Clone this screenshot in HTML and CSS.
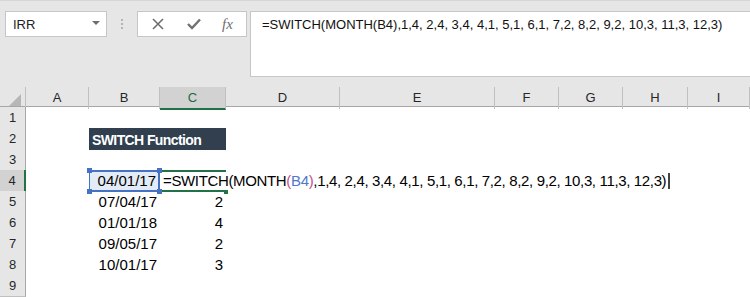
FILE: index.html
```html
<!DOCTYPE html>
<html lang="en">

<head>
    <meta charset="UTF-8">
    <title>SWITCH Function</title>
    <link rel="stylesheet" href="styles.css">
</head>

<body>
    <div class="toolbar">
        <div class="name-box">
            <span>IRR</span>
            <span class="caret"></span>
        </div>
        <div class="grip"><i></i><i></i><i></i></div>
        <div class="fx-buttons">
            <svg class="ico" width="12" height="12" viewBox="0 0 12 12">
                <path d="M1 1 L11 11 M11 1 L1 11" stroke="#707070" stroke-width="1.6" fill="none" />
            </svg>
            <svg class="ico" width="14" height="12" viewBox="0 0 14 12">
                <path d="M1 6 L5 10 L13 1.5" stroke="#707070" stroke-width="2.4" fill="none" />
            </svg>
            <span class="fx">fx</span>
        </div>
        <div class="formula-bar">=SWITCH(MONTH(B4),1,4, 2,4, 3,4, 4,1, 5,1, 6,1, 7,2, 8,2, 9,2, 10,3, 11,3, 12,3)</div>
    </div>

    <div class="sheet">
        <div class="row head">
            <div class="corner">
                <svg width="12" height="12" viewBox="0 0 12 12">
                    <polygon points="12,0 12,12 0,12" fill="#b6b6b6" />
                </svg>
            </div>
            <div class="ch">A</div>
            <div class="ch">B</div>
            <div class="ch ch-sel">C</div>
            <div class="ch">D</div>
            <div class="ch">E</div>
            <div class="ch">F</div>
            <div class="ch">G</div>
            <div class="ch">H</div>
            <div class="ch">I</div>
        </div>
        <div class="row">
            <div class="rh">1</div>
        </div>
        <div class="row">
            <div class="rh">2</div>
            <div class="c title">SWITCH Function</div>
        </div>
        <div class="row">
            <div class="rh">3</div>
        </div>
        <div class="row">
            <div class="rh rh-sel">4</div>
            <div class="c col-b num ref">04/01/17
                <span class="hd hd-tl"></span><span class="hd hd-tr"></span>
                <span class="hd hd-bl"></span><span class="hd hd-br"></span>
            </div>
            <div class="c col-c edit">=SWITCH(MONTH<span class="pa">(</span><span class="rf">B4</span><span class="pa">)</span>,1,4, 2,4, 3,4, 4,1, 5,1, 6,1, 7,2, 8,2, 9,2, 10,3, 11,3, 12,3)<span class="cursor"></span>
                <span class="fill"></span>
            </div>
        </div>
        <div class="row">
            <div class="rh">5</div>
            <div class="c col-b num">07/04/17</div>
            <div class="c col-c num">2</div>
        </div>
        <div class="row">
            <div class="rh">6</div>
            <div class="c col-b num">01/01/18</div>
            <div class="c col-c num">4</div>
        </div>
        <div class="row">
            <div class="rh">7</div>
            <div class="c col-b num">09/05/17</div>
            <div class="c col-c num">2</div>
        </div>
        <div class="row">
            <div class="rh">8</div>
            <div class="c col-b num">10/01/17</div>
            <div class="c col-c num">3</div>
        </div>
        <div class="row">
            <div class="rh">9</div>
        </div>
    </div>
</body>

</html>
```

FILE: styles.css
```css
* {
    box-sizing: border-box;
}

body {
    margin: 0;
    width: 750px;
    height: 297px;
    overflow: hidden;
    background: #fff;
    font-family: "Liberation Sans", Arial, sans-serif;
    color: #000;
}

/* formula toolbar */
.toolbar {
    height: 87px;
    background: #e6e6e6;
    border-top: 1px solid #d6d6d6;
    display: flex;
    align-items: flex-start;
    padding: 10px 0 0 5px;
}

.name-box {
    width: 102px;
    height: 26px;
    background: #fff;
    border: 1px solid #c6c6c6;
    display: flex;
    align-items: center;
    justify-content: space-between;
    padding: 0 6px 0 7px;
    font-size: 13px;
    color: #222;
}

.caret {
    width: 0;
    height: 0;
    border-left: 4px solid transparent;
    border-right: 4px solid transparent;
    border-top: 4px solid #6e6e6e;
    margin-bottom: 2px;
}

.grip {
    width: 30px;
    height: 26px;
    display: flex;
    flex-direction: column;
    align-items: center;
    justify-content: center;
    gap: 2px;
}

.grip i {
    display: block;
    width: 2px;
    height: 2px;
    background: #b4b4b4;
}

.fx-buttons {
    width: 110px;
    height: 26px;
    background: #fff;
    border: 1px solid #c6c6c6;
    display: flex;
    align-items: center;
    padding-left: 14px;
    gap: 23px;
}

.fx {
    font-family: "Liberation Serif", "Times New Roman", serif;
    font-style: italic;
    font-size: 15px;
    color: #6e6e6e;
    margin-left: -2px;
}

.formula-bar {
    flex: 1;
    margin-left: 3px;
    margin-right: -2px;
    height: 66px;
    background: #fff;
    border: 1px solid #c6c6c6;
    padding: 4px 0 0 11px;
    font-size: 13px;
    line-height: 18px;
    color: #111;
    white-space: nowrap;
}

/* sheet grid */
.row {
    display: grid;
    grid-template-columns: 26px 63px 71px 66px 114px 155px 64px 64px 65px 1fr;
    height: 21px;
}

.row.head {
    height: 20px;
    background: #e6e6e6;
    border-bottom: 1px solid #a6a6a6;
}

.corner {
    border-right: 1px solid #c0c0c0;
    display: flex;
    align-items: flex-end;
    justify-content: flex-end;
    padding: 0 4px 3px 0;
}

.ch {
    border-right: 1px solid #c0c0c0;
    text-align: center;
    font-size: 13px;
    line-height: 20px;
    padding-top: 1px;
    color: #262626;
}

.ch-sel {
    background: #d2d2d2;
    color: #1d6b40;
    border-bottom: 2px solid #217346;
    margin-bottom: -1px;
}

.rh {
    grid-column: 1;
    background: #e6e6e6;
    border-right: 1px solid #a6a6a6;
    border-bottom: 1px solid #c0c0c0;
    text-align: center;
    font-size: 13px;
    line-height: 20px;
    padding-top: 1px;
    color: #262626;
}

.rh-sel {
    background: #d2d2d2;
    border-right: 2px solid #217346;
}

.c {
    font-size: 15px;
    line-height: 20px;
    padding-top: 1px;
    white-space: nowrap;
    position: relative;
}

.col-b {
    grid-column: 3;
}

.col-c {
    grid-column: 4;
}

.num {
    text-align: right;
    padding-right: 3px;
}

.title {
    grid-column: 3 / 5;
    background: #323f4f;
    color: #fff;
    font-weight: bold;
    font-size: 14px;
    letter-spacing: -0.6px;
    padding-left: 3px;
    padding-top: 2px;
}

/* reference highlight on B4 */
.ref {
    background: #e2ebf6;
    border-top: 2px solid #4472c4;
    border-bottom: 2px solid #4472c4;
    border-left: 1px solid #4472c4;
    border-right: 2px solid #4472c4;
    padding-top: 0;
    padding-right: 2px;
    line-height: 17px;
}

.hd {
    position: absolute;
    width: 5px;
    height: 5px;
    background: #4472c4;
}

.hd-tl { left: -3px; top: -4px; }
.hd-tr { right: -4px; top: -4px; }
.hd-bl { left: -3px; bottom: -4px; }
.hd-br { right: -4px; bottom: -4px; }

/* cell being edited */
.edit {
    border-top: 2px solid #217346;
    border-bottom: 2px solid #217346;
    margin-left: 2px;
    padding-left: 1px;
    padding-top: 0;
    line-height: 17px;
    font-size: 15px;
    letter-spacing: -0.35px;
    overflow: visible;
}

.pa {
    color: #c5508a;
}

.rf {
    color: #4f78cc;
}

.cursor {
    display: inline-block;
    width: 2px;
    height: 16px;
    background: #444;
    margin-left: 2px;
    vertical-align: -3px;
}

.fill {
    position: absolute;
    right: -2px;
    bottom: -4px;
    width: 4px;
    height: 4px;
    background: #217346;
}
```
